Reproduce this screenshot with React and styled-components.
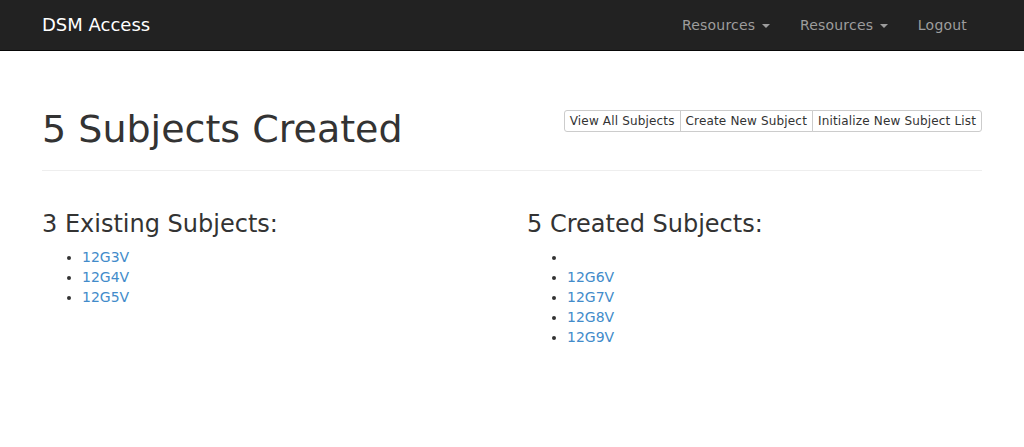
import React from "react";
import styled, { createGlobalStyle } from "styled-components";

const GlobalStyle = createGlobalStyle`
  * { box-sizing: border-box; }
  body {
    margin: 0;
    font-family: "DejaVu Sans", "Helvetica Neue", Helvetica, Arial, sans-serif;
    font-size: 14px;
    line-height: 1.428571429;
    color: #333;
    background: #fff;
  }
`;

const Navbar = styled.nav`
  height: 51px;
  background: #222;
  border-bottom: 1px solid #080808;
  margin-bottom: 20px;
`;

const Container = styled.div`
  width: 970px;
  margin: 0 auto;
  padding: 0 15px;
`;

const Main = styled(Container)`
  display: flow-root;
`;

const NavInner = styled(Container)`
  display: flex;
  justify-content: space-between;
  align-items: center;
  height: 50px;
`;

const Brand = styled.a`
  font-size: 18px;
  line-height: 20px;
  color: #fff;
  text-decoration: none;
  padding: 15px 0;
`;

const NavList = styled.ul`
  display: flex;
  list-style: none;
  margin: 0;
  padding: 0;
`;

const NavLink = styled.a`
  display: block;
  padding: 15px;
  line-height: 20px;
  color: #9d9d9d;
  text-decoration: none;
  letter-spacing: 0.2px;
`;

const Caret = styled.span`
  display: inline-block;
  width: 0;
  height: 0;
  margin-left: 2px;
  vertical-align: middle;
  border-top: 4px solid;
  border-left: 4px solid transparent;
  border-right: 4px solid transparent;
`;

const PageHeader = styled.div`
  display: flex;
  justify-content: space-between;
  align-items: flex-start;
  margin: 38px 0 20px;
  padding-bottom: 9px;
  border-bottom: 1px solid #eee;
`;

const Title = styled.h1`
  font-size: 38px;
  font-weight: 500;
  line-height: 1.1;
  margin: 0 0 10px;
`;

const BtnGroup = styled.div`
  display: flex;
  margin-top: 1px;
`;

const Btn = styled.button`
  font-family: inherit;
  font-size: 12px;
  line-height: 1.5;
  letter-spacing: 0.16px;
  padding: 1px 5px;
  color: #333;
  background: #fff;
  border: 1px solid #ccc;
  margin-left: -1px;
  border-radius: 0;
  &:first-child {
    border-radius: 3px 0 0 3px;
    margin-left: 0;
  }
  &:last-child {
    border-radius: 0 3px 3px 0;
  }
`;

const Row = styled.div`
  display: grid;
  grid-template-columns: 1fr 1fr;
  margin: 0 -15px;
`;

const Col = styled.div`
  padding: 0 15px;
`;

const SubTitle = styled.h3`
  font-size: 24px;
  font-weight: 500;
  line-height: 1.1;
  margin: 20px 0 10px;
`;

const List = styled.ul`
  margin: 0 0 10px;
  padding-left: 40px;
`;

const Item = styled.li`
  min-height: 20px;
`;

const SubjectLink = styled.a`
  color: #428bca;
  text-decoration: none;
`;

const existing = ["12G3V", "12G4V", "12G5V"];
const created = ["", "12G6V", "12G7V", "12G8V", "12G9V"];

function SubjectList({ items }) {
  return (
    <List>
      {items.map((s, i) => (
        <Item key={i}>{s && <SubjectLink href="#">{s}</SubjectLink>}</Item>
      ))}
    </List>
  );
}

export default function App() {
  return (
    <>
      <GlobalStyle />
      <Navbar>
        <NavInner>
          <Brand href="#">DSM Access</Brand>
          <NavList>
            <li>
              <NavLink href="#">
                Resources <Caret />
              </NavLink>
            </li>
            <li>
              <NavLink href="#">
                Resources <Caret />
              </NavLink>
            </li>
            <li>
              <NavLink href="#">Logout</NavLink>
            </li>
          </NavList>
        </NavInner>
      </Navbar>
      <Main>
        <PageHeader>
          <Title>5 Subjects Created</Title>
          <BtnGroup>
            <Btn>View All Subjects</Btn>
            <Btn>Create New Subject</Btn>
            <Btn>Initialize New Subject List</Btn>
          </BtnGroup>
        </PageHeader>
        <Row>
          <Col>
            <SubTitle>3 Existing Subjects:</SubTitle>
            <SubjectList items={existing} />
          </Col>
          <Col>
            <SubTitle>5 Created Subjects:</SubTitle>
            <SubjectList items={created} />
          </Col>
        </Row>
      </Main>
    </>
  );
}
